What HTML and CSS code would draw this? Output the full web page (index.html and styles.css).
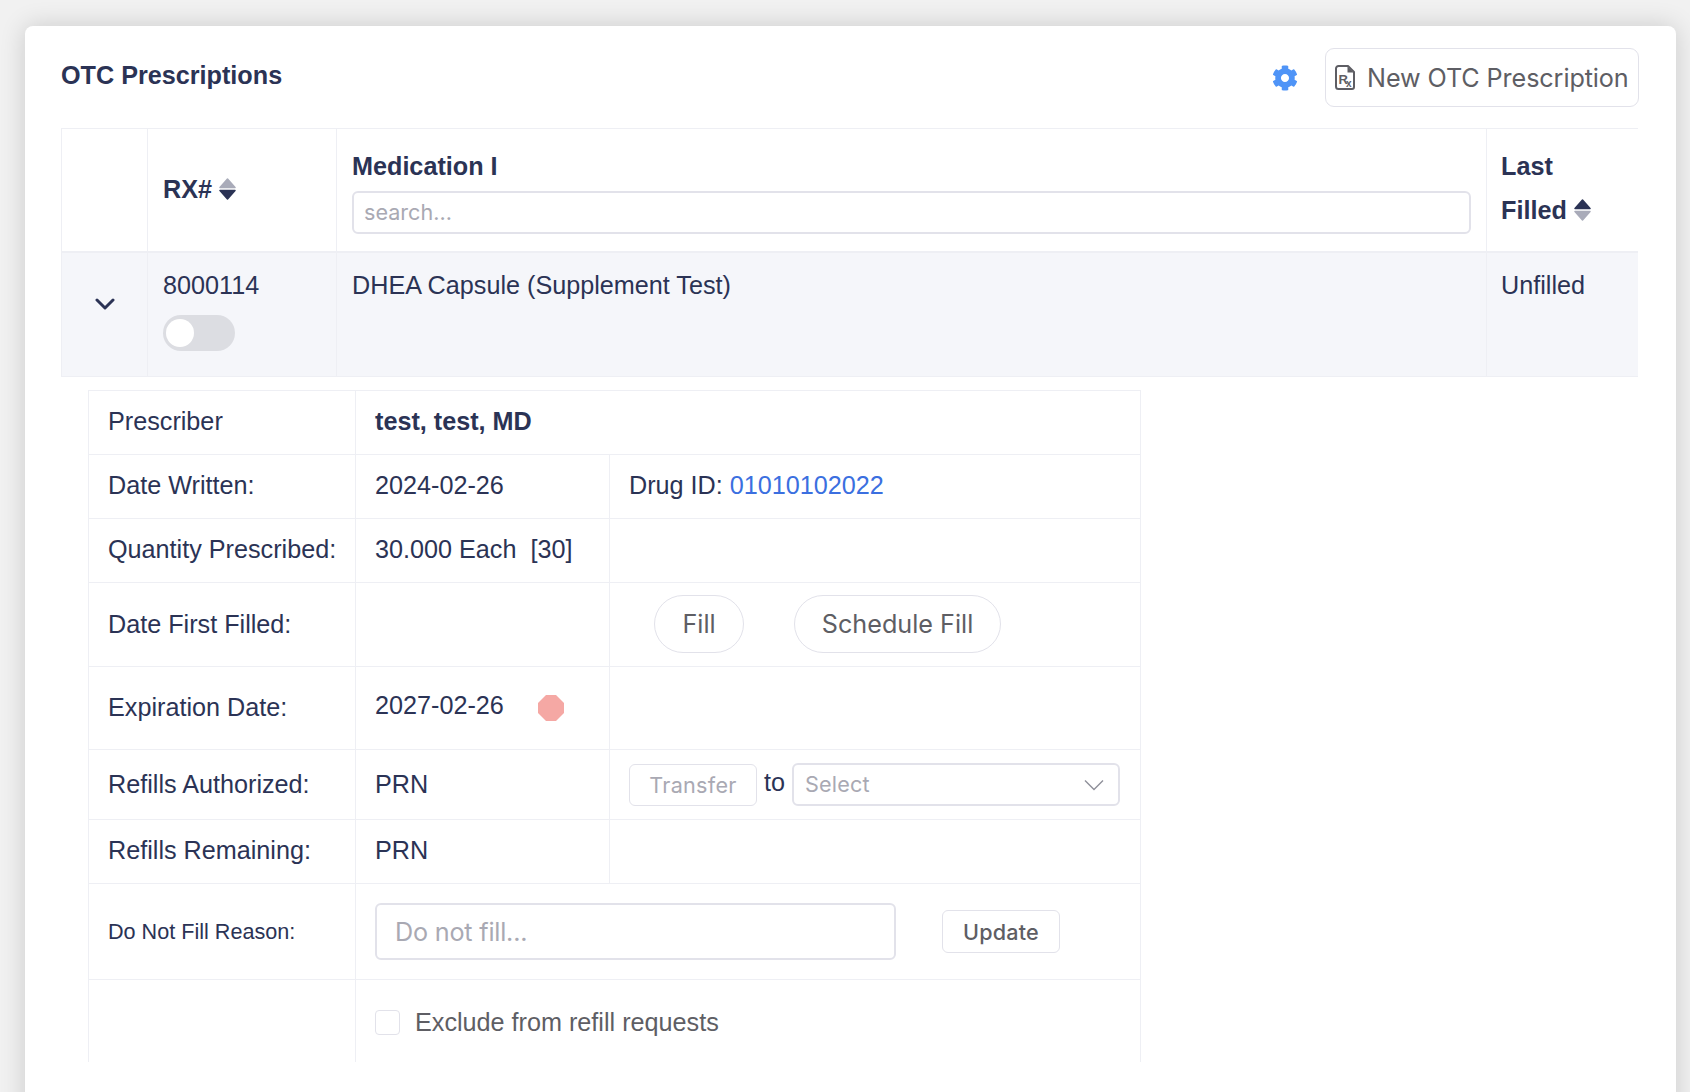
FILE: index.html
```html
<!DOCTYPE html>
<html lang="en">
<head>
    <meta charset="UTF-8">
    <meta name="viewport" content="width=device-width, initial-scale=1.0">
    <title>OTC Prescriptions</title>
    <link rel="stylesheet" href="styles.css">
</head>
<body>
    <div class="card">
        <!-- Card header -->
        <div class="card-header">
            <h2>OTC Prescriptions</h2>
            <div class="header-actions">
                <svg class="gear" viewBox="0 0 512 512"><path fill="#4f94f7" d="M487.4 315.7l-42.6-24.6c4.3-23.2 4.3-47 0-70.2l42.6-24.6c4.9-2.8 7.1-8.6 5.5-14-11.1-35.6-30-67.8-54.7-94.6-3.8-4.1-10-5.1-14.8-2.3L380.8 110c-17.9-15.4-38.5-27.3-60.8-35.1V25.8c0-5.6-3.9-10.5-9.4-11.7-36.7-8.2-74.3-7.8-109.2 0-5.5 1.2-9.4 6.1-9.4 11.7V75c-22.2 7.9-42.8 19.8-60.8 35.1L88.7 85.5c-4.9-2.8-11-1.9-14.8 2.3-24.7 26.7-43.6 58.9-54.7 94.6-1.7 5.4.6 11.2 5.5 14L67.3 221c-4.3 23.2-4.3 47 0 70.2l-42.6 24.6c-4.9 2.8-7.1 8.6-5.5 14 11.1 35.6 30 67.8 54.7 94.6 3.8 4.1 10 5.1 14.8 2.3l42.6-24.6c17.9 15.4 38.5 27.3 60.8 35.1v49.2c0 5.6 3.9 10.5 9.4 11.7 36.7 8.2 74.3 7.8 109.2 0 5.5-1.2 9.4-6.1 9.4-11.7v-49.2c22.2-7.9 42.8-19.8 60.8-35.1l42.6 24.6c4.9 2.8 11 1.9 14.8-2.3 24.7-26.7 43.6-58.9 54.7-94.6 1.5-5.5-.7-11.3-5.6-14.1zM256 336c-44.1 0-80-35.9-80-80s35.9-80 80-80 80 35.9 80 80-35.9 80-80 80z"/></svg>
                <button class="btn btn-new">
                    <svg class="rx-icon" viewBox="0 0 20 25"><path fill="none" stroke="#5e5e64" stroke-width="2" stroke-linejoin="round" d="M3.500 1H13l6 6v15a2 2 0 0 1-2 2H3.500a2.500 2.500 0 0 1-2.500-2.500V3.500A2.500 2.500 0 0 1 3.500 1z"/><path fill="#5e5e64" d="M12.500 1.500V7.500H18.500z"/><text x="3.500" y="18.500" class="rx-r">R</text><text x="11" y="21.500" class="rx-x">x</text></svg>
                    <span class="btn-text">New OTC Prescription</span>
                </button>
            </div>
        </div>

        <!-- Prescription list -->
        <table class="rx-table">
            <colgroup>
                <col class="col-toggle">
                <col class="col-rx">
                <col class="col-med">
                <col class="col-last">
            </colgroup>
            <thead>
                <tr>
                    <th></th>
                    <th>
                        RX#
                        <svg class="sort" viewBox="0 0 17 22"><path fill="#a9abb9" stroke="#a9abb9" stroke-width="1.500" stroke-linejoin="round" d="M8.500 1L16 9.500H1z"/><path fill="#2b3355" stroke="#2b3355" stroke-width="1.500" stroke-linejoin="round" d="M1 12.500H16L8.500 21z"/></svg>
                    </th>
                    <th class="th-med">
                        <div class="med-label">Medication I</div>
                        <input type="text" class="input-search" placeholder="search...">
                    </th>
                    <th class="th-last">
                        Last<br>Filled
                        <svg class="sort" viewBox="0 0 17 22"><path fill="#2b3355" stroke="#2b3355" stroke-width="1.500" stroke-linejoin="round" d="M8.500 1L16 9.500H1z"/><path fill="#a9abb9" stroke="#a9abb9" stroke-width="1.500" stroke-linejoin="round" d="M1 12.500H16L8.500 21z"/></svg>
                    </th>
                </tr>
            </thead>
            <tbody>
                <tr class="row-open">
                    <td class="cell-chevron">
                        <svg class="chevron" viewBox="0 0 20 12"><path fill="none" stroke="#2b3355" stroke-width="3" stroke-linecap="round" stroke-linejoin="round" d="M2 2l8 8 8-8"/></svg>
                    </td>
                    <td>
                        <div>8000114</div>
                        <div class="toggle"><span class="knob"></span></div>
                    </td>
                    <td>DHEA Capsule (Supplement Test)</td>
                    <td class="td-last">Unfilled</td>
                </tr>
            </tbody>
        </table>

        <!-- Expanded details -->
        <table class="detail-table">
            <colgroup>
                <col class="col-a">
                <col class="col-b">
                <col class="col-c">
            </colgroup>
            <tr class="h64">
                <td>Prescriber</td>
                <td colspan="2"><strong>test, test, MD</strong></td>
            </tr>
            <tr class="h64">
                <td>Date Written:</td>
                <td>2024-02-26</td>
                <td>Drug ID: <a href="#" class="drug-link">01010102022</a></td>
            </tr>
            <tr class="h64">
                <td>Quantity Prescribed:</td>
                <td>30.000 Each &nbsp;[30]</td>
                <td></td>
            </tr>
            <tr class="h84">
                <td>Date First Filled:</td>
                <td></td>
                <td>
                    <button class="btn-pill btn-fill">Fill</button>
                    <button class="btn-pill btn-schedule">Schedule Fill</button>
                </td>
            </tr>
            <tr class="h83">
                <td>Expiration Date:</td>
                <td>
                    <div class="exp-wrap">
                        <span class="exp-date">2027-02-26</span>
                        <svg class="dot" viewBox="0 0 26 26"><path fill="#f5a8a4" d="M8 0h10l8 8v10l-8 8H8l-8-8V8z"/></svg>
                    </div>
                </td>
                <td></td>
            </tr>
            <tr class="h70">
                <td>Refills Authorized:</td>
                <td>PRN</td>
                <td class="cell-transfer">
                    <div class="transfer-wrap">
                        <button class="btn btn-transfer">Transfer</button>
                        <span class="to">to</span>
                        <div class="select">
                            <span>Select</span>
                            <svg class="select-arrow" viewBox="0 0 20 12"><path fill="none" stroke="#8f909a" stroke-width="1.400" d="M1 1.500l9 9 9-9"/></svg>
                        </div>
                    </div>
                </td>
            </tr>
            <tr class="h64">
                <td>Refills Remaining:</td>
                <td>PRN</td>
                <td></td>
            </tr>
            <tr class="h96">
                <td class="small-label">Do Not Fill Reason:</td>
                <td colspan="2">
                    <div class="dnf-wrap">
                        <input type="text" class="input-dnf" placeholder="Do not fill...">
                        <button class="btn btn-update">Update</button>
                    </div>
                </td>
            </tr>
            <tr class="h81 last-row">
                <td></td>
                <td colspan="2">
                    <label class="check-label"><span class="check-box"></span>Exclude from refill requests</label>
                </td>
            </tr>
        </table>
    </div>
</body>
</html>
```

FILE: styles.css
```css
* {
    box-sizing: border-box;
}

html, body {
    height: 100%;
}

body {
    margin: 0;
    padding: 26px 14px 0 25px;
    background-color: #f1f1f1;
    font-family: "Liberation Sans", Arial, sans-serif;
    font-size: 25.2px;
    line-height: 37.8px;
    color: #2b3355;
    overflow: hidden;
}

.card {
    height: 1200px;
    padding: 21px 37px 0 36px;
    background-color: #fff;
    border-radius: 8px;
    box-shadow: 0 0 26px rgba(0, 0, 0, 0.16);
}

/* Header */
.card-header {
    display: flex;
    justify-content: space-between;
    height: 81px;
}

h2 {
    margin: 10px 0 0;
    font-size: 25.2px;
    line-height: 37.8px;
    font-weight: bold;
}

.header-actions {
    display: flex;
    align-items: flex-start;
}

.gear {
    width: 26px;
    height: 26px;
    margin: 18px 27px 0 0;
}

.btn {
    background-color: #fff;
    border: 1px solid #e2e2ea;
    border-radius: 6px;
    font-family: Inter, "Liberation Sans", sans-serif;
    color: #5e5e64;
    padding: 0;
}

.btn-new {
    display: flex;
    align-items: center;
    width: 314px;
    height: 59px;
    margin-top: 1px;
    padding-left: 9px;
    font-size: 25.2px;
    letter-spacing: -0.1px;
    border-radius: 9px;
}

.btn-text {
    white-space: nowrap;
}

.rx-icon {
    flex: none;
    width: 20px;
    height: 25px;
    margin-right: 12px;
}

.rx-r {
    font-family: "Liberation Sans", sans-serif;
    font-size: 13px;
    font-weight: bold;
    fill: #5e5e64;
}

.rx-x {
    font-family: "Liberation Sans", sans-serif;
    font-size: 10px;
    font-weight: bold;
    fill: #5e5e64;
}

/* Prescription table */
table {
    border-collapse: collapse;
    table-layout: fixed;
}

.rx-table {
    width: 1576px;
}

.col-toggle { width: 86px; }
.col-rx { width: 189px; }
.col-med { width: 1150px; }
.col-last { width: 151px; }

.rx-table th,
.rx-table td {
    border: 1px solid #eeeff4;
    padding: 0 15px;
    text-align: left;
}

.rx-table th:last-child,
.rx-table td:last-child {
    border-right: none;
}

.rx-table th {
    height: 123px;
    font-weight: bold;
    border-bottom-width: 2px;
}

.rx-table .th-med {
    padding-bottom: 2px;
}

.rx-table .th-last {
    line-height: 44px;
    padding: 0 0 3px 14px;
}

.med-label {
    line-height: 45.4px;
    margin-top: 0;
    margin-bottom: 2px;
}

.sort {
    width: 17px;
    height: 22px;
    vertical-align: -2px;
}

.input-search {
    display: block;
    width: 100%;
    height: 43px;
    padding: 0 10px;
    border: 2px solid #e2e2ea;
    border-radius: 6px;
    background-color: #fff;
    outline: none;
    font-family: Inter, "Liberation Sans", sans-serif;
    font-size: 21.6px;
}

input::placeholder {
    color: #a9a9b3;
}

.row-open td {
    height: 125px;
    background-color: #f5f6fa;
    vertical-align: top;
    padding-top: 14px;
}

.row-open .td-last {
    padding-left: 14px;
}

.row-open .cell-chevron {
    vertical-align: middle;
    text-align: center;
    padding: 0 0 21px;
}

.chevron {
    display: block;
    width: 20px;
    height: 12px;
    margin: 0 auto;
}

.toggle {
    display: flex;
    align-items: center;
    width: 72px;
    height: 36px;
    margin-top: 11px;
    padding-left: 3px;
    background-color: #dcdde2;
    border-radius: 18px;
}

.knob {
    width: 28px;
    height: 28px;
    background-color: #fff;
    border-radius: 50%;
}

/* Detail table */
.detail-table {
    width: 1052px;
    margin: 13px 0 0 27px;
}

.col-a { width: 267px; }
.col-b { width: 254px; }
.col-c { width: 531px; }

.detail-table td {
    border: 1px solid #eeeff4;
    padding: 0 19px 2px;
    white-space: nowrap;
}

.h64 td { height: 64px; }
.h84 td { height: 84px; padding-bottom: 0; }
.h83 td { height: 83px; padding-bottom: 0; }
.h70 td { height: 70px; padding-bottom: 0; }
.h96 td { height: 96px; padding-bottom: 0; }
.h81 td { height: 82px; }

.last-row td {
    border-bottom: none;
}

.detail-table strong {
    font-weight: bold;
}

.drug-link {
    color: #3b6fe0;
    text-decoration: none;
}

.small-label {
    font-size: 21.6px;
}

.btn-pill {
    height: 58px;
    margin-bottom: 2px;
    background-color: #fff;
    border: 1px solid #e2e2ea;
    border-radius: 29px;
    font-family: Inter, "Liberation Sans", sans-serif;
    font-size: 25.2px;
    color: #5e5e64;
    padding: 0;
}

.btn-fill {
    width: 90px;
    margin-left: 25px;
}

.btn-schedule {
    width: 207px;
    margin-left: 43px;
}

.exp-wrap {
    display: flex;
    align-items: center;
}

.exp-date {
    margin-top: -4px;
}

.dot {
    width: 26px;
    height: 26px;
    margin-left: 34px;
}

.transfer-wrap {
    display: flex;
    align-items: center;
}

.btn-transfer {
    width: 128px;
    height: 42px;
    font-size: 21.6px;
    letter-spacing: 0.3px;
    color: #a9a9b3;
}

.to {
    margin: -4px 7px 0;
}

.select {
    display: flex;
    align-items: center;
    justify-content: space-between;
    width: 328px;
    height: 43px;
    padding: 0 14px 0 11px;
    border: 2px solid #e2e2ea;
    border-radius: 6px;
    font-family: Inter, "Liberation Sans", sans-serif;
    font-size: 21.6px;
    letter-spacing: 0.2px;
    color: #a9a9b3;
}

.select-arrow {
    width: 20px;
    height: 12px;
}

.dnf-wrap {
    display: flex;
    align-items: center;
}

.input-dnf {
    width: 521px;
    height: 57px;
    padding: 0 18px;
    border: 2px solid #e2e2ea;
    border-radius: 6px;
    outline: none;
    font-family: Inter, "Liberation Sans", sans-serif;
    font-size: 25.2px;
    letter-spacing: -0.2px;
}

.btn-update {
    width: 118px;
    height: 43px;
    margin-left: 46px;
    font-size: 21.6px;
    font-weight: 500;
    letter-spacing: 0.2px;
}

.check-label {
    display: flex;
    align-items: center;
    color: #5e5e64;
    margin-top: 7px;
}

.check-box {
    width: 25px;
    height: 25px;
    margin: -2px 15px 0 0;
    background-color: #fff;
    border: 1px solid #e2e2ea;
    border-radius: 4px;
}
```
